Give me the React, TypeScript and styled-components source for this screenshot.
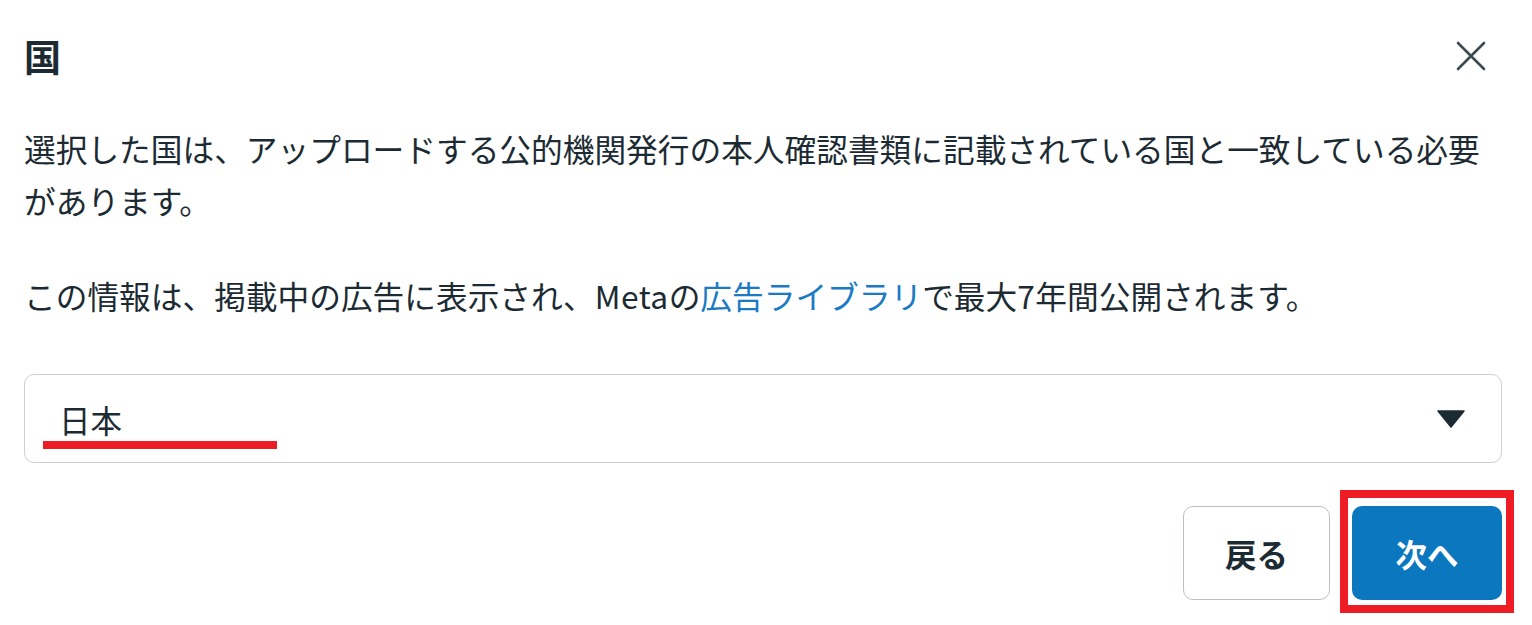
import React from 'react'
import styled, { createGlobalStyle } from 'styled-components'

const GlobalStyle = createGlobalStyle`
  html, body {
    margin: 0;
    padding: 0;
    background: #fff;
  }
  body {
    font-family: "Noto Sans CJK JP", "Noto Sans", sans-serif;
    color: #1c2b33;
  }
`

const Dialog = styled.div`
  width: 1532px;
  height: 625px;
  box-sizing: border-box;
  padding: 36px 30px 0 24px;
  background: #fff;
`

const Header = styled.div`
  display: flex;
  align-items: center;
  justify-content: space-between;
  height: 40px;
`

const Title = styled.h2`
  margin: 0;
  font-size: 37px;
  line-height: 40px;
  font-weight: 700;
`

const CloseButton = styled.button`
  display: flex;
  align-items: center;
  justify-content: center;
  width: 32px;
  height: 32px;
  margin-right: 15px;
  padding: 0;
  border: none;
  background: transparent;
  color: #3e4a52;
  cursor: pointer;
`

const Paragraph = styled.p<{ $gap: number }>`
  margin: ${ p => p.$gap }px 0 0;
  font-size: 31.7px;
  line-height: 52px;
`

const Latin = styled.span`
  letter-spacing: 0.5px;
`

const Link = styled.a`
  color: #1b7ac4;
  text-decoration: none;
`

const Select = styled.div`
  position: relative;
  display: flex;
  align-items: center;
  justify-content: space-between;
  margin-top: 53px;
  height: 89px;
  box-sizing: border-box;
  padding: 0 36px 0 34px;
  border: 1.5px solid #ccd0d5;
  border-radius: 10px;
  font-size: 31.5px;
`

const Underline = styled.span`
  position: absolute;
  left: 18px;
  top: 66px;
  width: 234px;
  height: 8px;
  background: #ee1c25;
`

const ButtonRow = styled.div`
  display: flex;
  justify-content: flex-end;
  gap: 22px;
  margin-top: 43px;
`

const Button = styled.button<{ $primary?: boolean }>`
  height: 94px;
  box-sizing: border-box;
  padding: 0;
  border-radius: 10px;
  font-family: "Noto Sans CJK JP", "Noto Sans", sans-serif;
  font-size: 31.5px;
  font-weight: 700;
  cursor: pointer;
  width: ${ p => p.$primary ? '150px' : '147px' };
  border: ${ p => p.$primary ? 'none' : '1.5px solid #bcc0c4' };
  background: ${ p => p.$primary ? '#0b77bf' : '#fff' };
  color: ${ p => p.$primary ? '#fff' : '#1c2b33' };
`

const Highlight = styled.span`
  position: relative;
  display: flex;

  &::after {
    content: '';
    position: absolute;
    left: -12px;
    right: -12px;
    top: -16px;
    bottom: -13px;
    border: 8px solid #ee1c25;
    pointer-events: none;
  }
`

const CloseIcon = () => (
  <svg width="30" height="30" viewBox="0 0 30 30" fill="none">
    <path d="M2 2 L28 28 M28 2 L2 28" stroke="currentColor" strokeWidth="2.6" strokeLinecap="round" />
  </svg>
)

const Caret = () => (
  <svg width="28" height="18" viewBox="0 0 28 18">
    <path d="M1 1 H27 L14 17 Z" fill="#1c2b33" strokeLinejoin="round" stroke="#1c2b33" strokeWidth="1.5" />
  </svg>
)

export default function App() {
  return (
    <>
      <GlobalStyle />
      <Dialog>
        <Header>
          <Title>国</Title>
          <CloseButton aria-label="閉じる"><CloseIcon /></CloseButton>
        </Header>
        <Paragraph $gap={ 46 }>
          選択した国は、アップロードする公的機関発行の本人確認書類に記載されている国と一致している必要があります。
        </Paragraph>
        <Paragraph $gap={ 43 }>
          この情報は、掲載中の広告に表示され、<Latin>Meta</Latin>の<Link href="#">広告ライブラリ</Link>で最大<Latin>7</Latin>年間公開されます。
        </Paragraph>
        <Select>
          <span>日本</span>
          <Caret />
          <Underline />
        </Select>
        <ButtonRow>
          <Button>戻る</Button>
          <Highlight>
            <Button $primary>次へ</Button>
          </Highlight>
        </ButtonRow>
      </Dialog>
    </>
  )
}
